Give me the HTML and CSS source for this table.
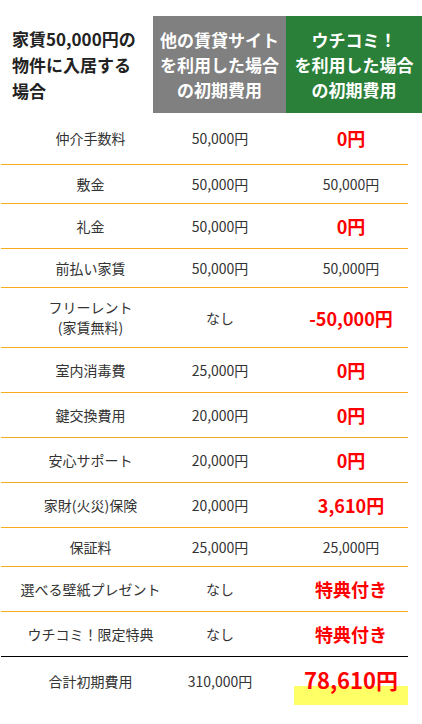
FILE: index.html
```html
<!DOCTYPE html>
<html lang="ja">
<head>
<meta charset="utf-8">
<title>初期費用比較</title>
<link rel="stylesheet" href="styles.css">
</head>
<body>
<div class="cmp">
  <div class="head">
    <div class="h-label">家賃50,000円の<br>物件に入居する<br>場合</div>
    <div class="h-col h-other">他の賃貸サイト<br>を利用した場合<br>の初期費用</div>
    <div class="h-col h-uchi">ウチコミ！<br>を利用した場合<br>の初期費用</div>
  </div>
  <div class="rows">
    <div class="row first"><div class="c1"><span>仲介手数料</span></div><div class="c2">50,000円</div><div class="c3 red">0円</div></div>
    <div class="row"><div class="c1"><span>敷金</span></div><div class="c2">50,000円</div><div class="c3">50,000円</div></div>
    <div class="row"><div class="c1"><span>礼金</span></div><div class="c2">50,000円</div><div class="c3 red">0円</div></div>
    <div class="row"><div class="c1"><span>前払い家賃</span></div><div class="c2">50,000円</div><div class="c3">50,000円</div></div>
    <div class="row"><div class="c1 two"><span>フリーレント<br>(家賃無料)</span></div><div class="c2">なし</div><div class="c3 red">-50,000円</div></div>
    <div class="row"><div class="c1"><span>室内消毒費</span></div><div class="c2">25,000円</div><div class="c3 red">0円</div></div>
    <div class="row"><div class="c1"><span>鍵交換費用</span></div><div class="c2">20,000円</div><div class="c3 red">0円</div></div>
    <div class="row"><div class="c1"><span>安心サポート</span></div><div class="c2">20,000円</div><div class="c3 red">0円</div></div>
    <div class="row"><div class="c1"><span>家財(火災)保険</span></div><div class="c2">20,000円</div><div class="c3 red">3,610円</div></div>
    <div class="row"><div class="c1"><span>保証料</span></div><div class="c2">25,000円</div><div class="c3">25,000円</div></div>
    <div class="row"><div class="c1"><span>選べる壁紙プレゼント</span></div><div class="c2">なし</div><div class="c3 red">特典付き</div></div>
    <div class="row last"><div class="c1"><span>ウチコミ！限定特典</span></div><div class="c2">なし</div><div class="c3 red">特典付き</div></div>
    <div class="row total"><div class="c1"><span>合計初期費用</span></div><div class="c2">310,000円</div><div class="c3"><span class="marker">78,610円</span></div></div>
  </div>
</div>
</body>
</html>
```

FILE: styles.css
```css
body {
  margin: 0;
  background: #fff;
  color: #333;
  font-family: "Noto Sans CJK JP", "Noto Sans", sans-serif;
}

.cmp {
  width: 422px;
}

.head {
  display: flex;
  margin-top: 16px;
  height: 97px;
}

.h-label {
  width: 141px;
  padding-left: 12px;
  display: flex;
  align-items: center;
  font-size: 17px;
  line-height: 26px;
  font-weight: bold;
  color: #222;
}

.h-col {
  display: flex;
  align-items: center;
  justify-content: center;
  text-align: center;
  color: #fff;
  font-size: 17px;
  line-height: 25px;
  font-weight: bold;
}

.h-other {
  width: 133px;
  background: #808080;
}

.h-uchi {
  flex: 1;
  background: #2a8038;
}

.rows {
  width: 407px;
  margin-left: 1px;
}

.row {
  display: grid;
  grid-template-columns: 145px 148px 114px;
  align-items: center;
  padding: 10px 0;
  border-bottom: 1px solid #f7ab1e;
  font-size: 14px;
  line-height: 18px;
  text-align: center;
}

.row.first {
  padding: 13px 0 14px;
}

.row.last {
  border-bottom-color: #000;
}

.c1 {
  padding-left: 34px;
  display: flex;
  justify-content: center;
  white-space: nowrap;
}

.c1.two {
  line-height: 19.5px;
}

.c2,
.c3 {
  white-space: nowrap;
}

.red {
  color: #ff0000;
  font-size: 18px;
  line-height: 24px;
  font-weight: bold;
}

.row.total {
  padding: 0;
  border-bottom: none;
  height: 48px;
}

.marker {
  display: block;
  height: 48px;
  line-height: 44px;
  font-size: 22px;
  font-weight: bold;
  color: #ff0000;
  background: linear-gradient(transparent 60%, #ffff66 60%);
}
```
